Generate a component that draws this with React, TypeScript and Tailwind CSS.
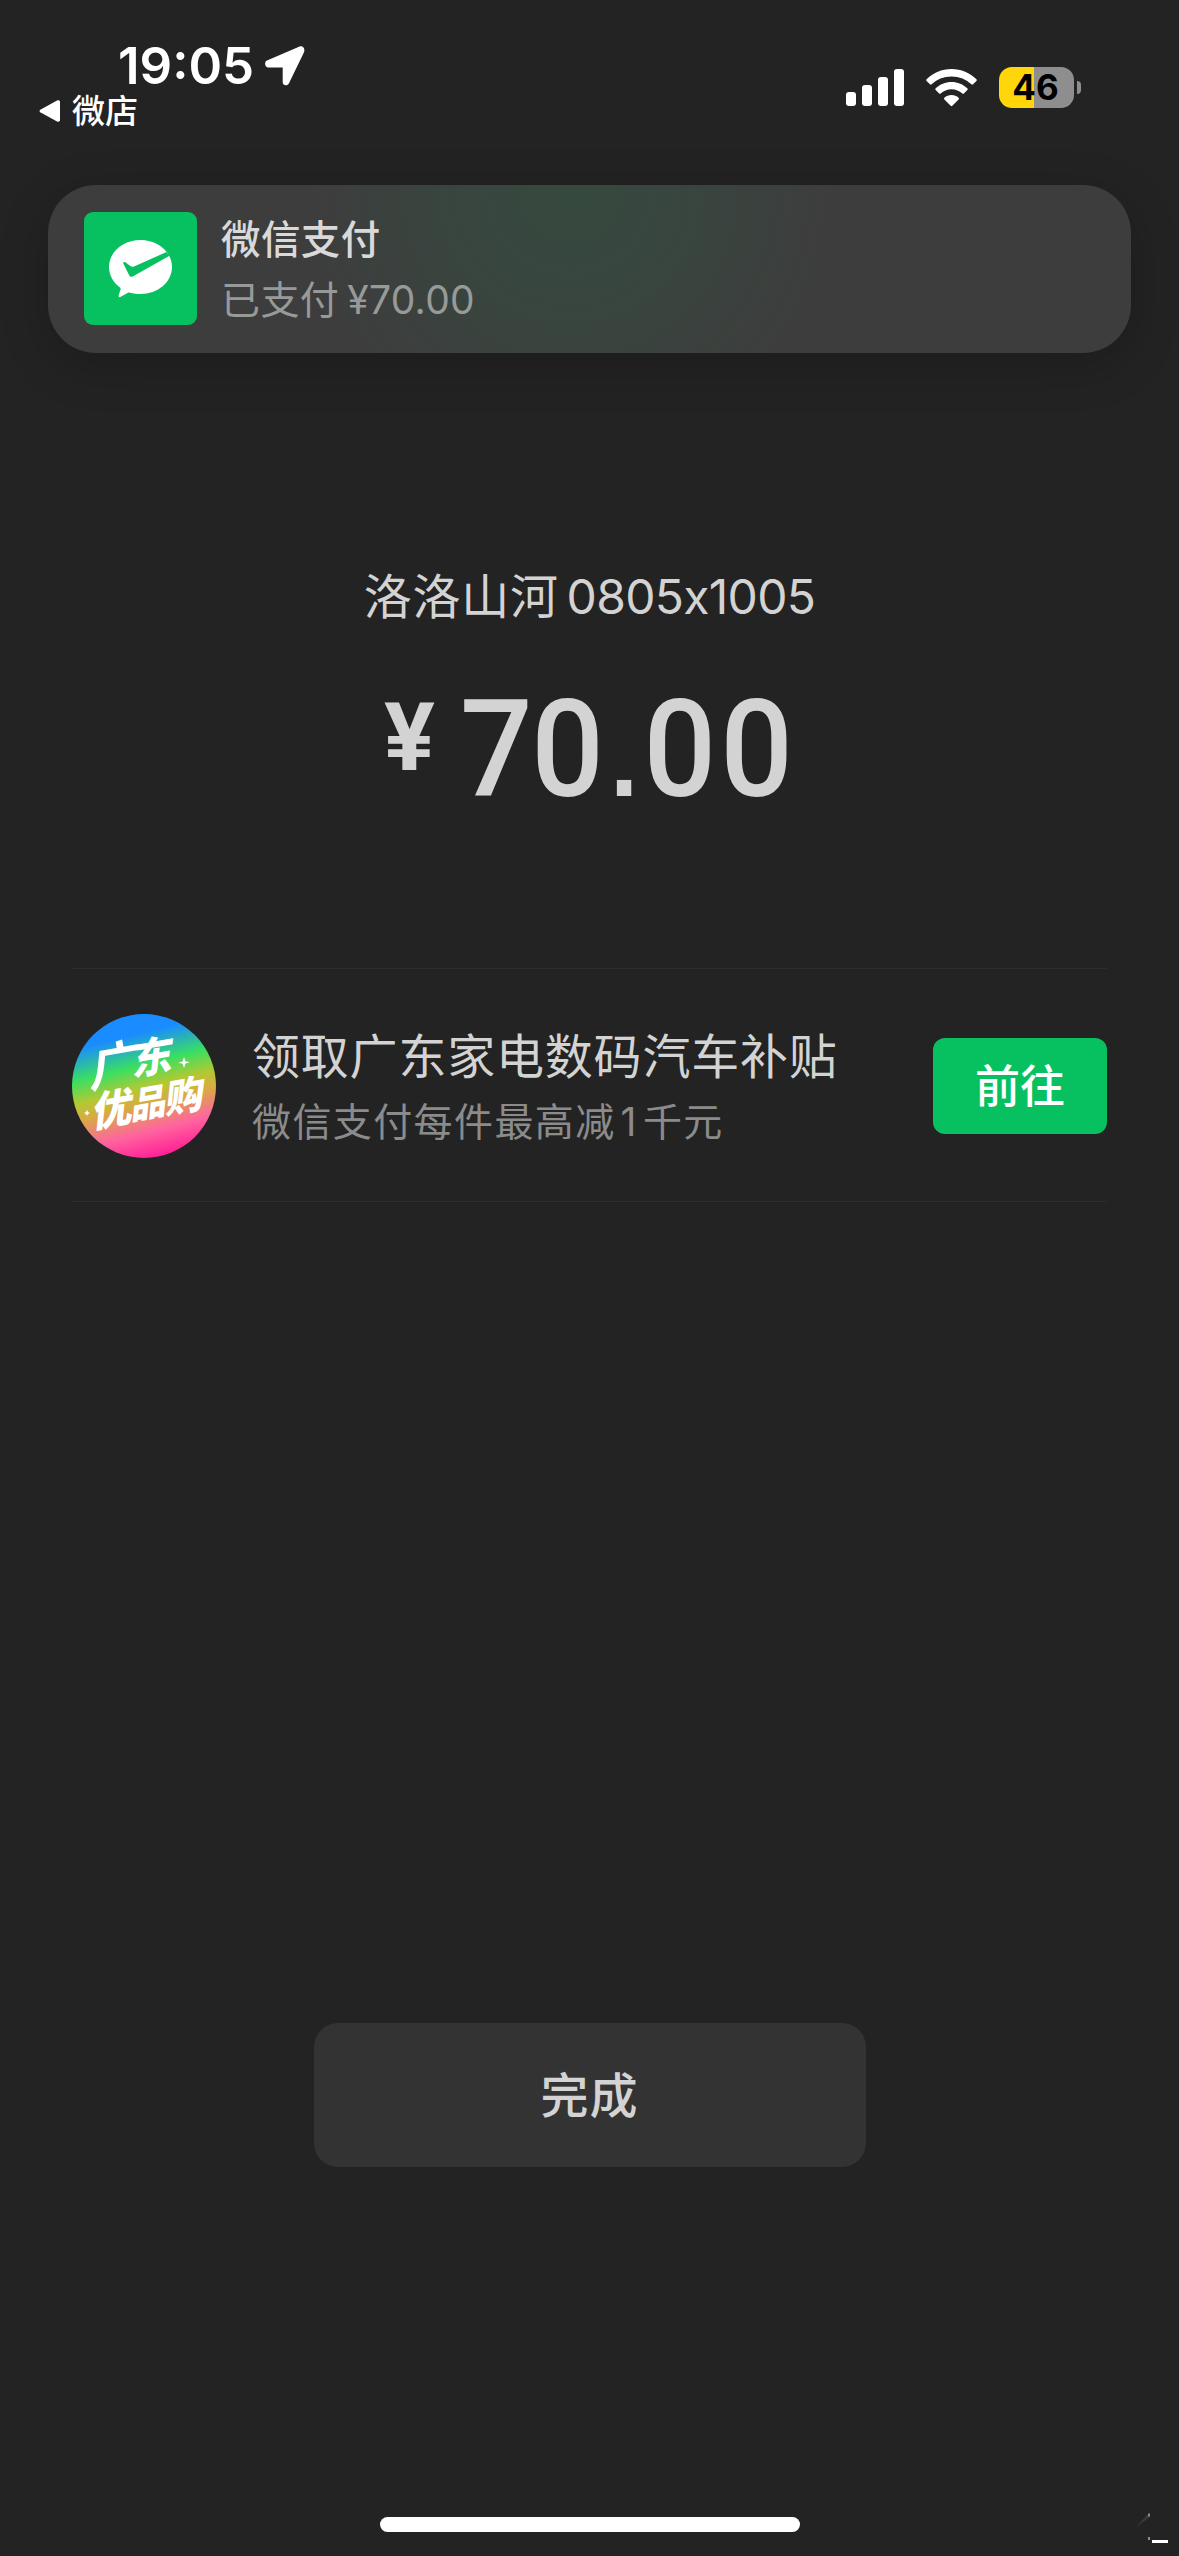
import { clsx } from "clsx";

const signalBars = ["h-[14px]", "h-[21px]", "h-[29px]", "h-[37px]"];

const badgeGlyphs = [
  { char: "广", place: "left-[19px] top-[27px] text-[49px] font-bold" },
  { char: "东", place: "left-[61px] top-[23px] text-[41px] font-black" },
  { char: "优", place: "left-[21px] top-[75px] text-[41px] font-black" },
  { char: "品", place: "left-[60px] top-[71px] text-[36px] font-black" },
  { char: "购", place: "left-[94px] top-[62px] text-[39px] font-black" },
];

function LocationArrow() {
  return (
    <svg width="40" height="40" viewBox="0 0 40 40" fill="white">
      <path d="M34.6.5 2 14.4C-.9 15.6-.4 21.4 3 21.4H17.700V36c0 3.900 5 4.400 6.400.900L39 6.200C40.300 2.500 38-.8 34.600.5Z" />
    </svg>
  );
}

function WifiIcon() {
  return (
    <svg width="51" height="38" viewBox="0 0 51 38" fill="white">
      <path d="M25.500 0C15.800 0 7 3.900.6 10.200a1.300 1.300 0 0 0 0 1.800l3.300 3.300c.5.500 1.200.5 1.700 0C10.700 10.400 17.700 7.400 25.500 7.400s14.800 3 19.900 7.900c.5.500 1.200.5 1.700 0l3.300-3.300a1.300 1.300 0 0 0 0-1.800C44 3.900 35.200 0 25.500 0Z" />
      <path d="M25.500 13C19.400 13 13.800 15.400 9.700 19.300a1.200 1.200 0 0 0 0 1.800l3.400 3.400c.4.400 1.100.4 1.600 0 2.800-2.600 6.600-4.200 10.800-4.200s8 1.600 10.800 4.200c.5.400 1.200.4 1.600 0l3.400-3.400a1.200 1.200 0 0 0 0-1.800C37.200 15.400 31.600 13 25.500 13Z" />
      <path d="M25.500 26c-2.800 0-5.200 1-7.100 2.700a1.100 1.100 0 0 0 0 1.700l6.300 6.400c.5.500 1.100.5 1.600 0l6.300-6.400a1.100 1.100 0 0 0 0-1.700C30.700 27 28.300 26 25.500 26Z" />
    </svg>
  );
}

function Battery() {
  return (
    <div className="flex items-center gap-[3px]">
      <div className="flex h-[41px] w-[75px] items-center justify-center overflow-hidden rounded-[13px] bg-[linear-gradient(90deg,#ffd60a_35px,#8e8e8e_35px)] pr-[2px] text-[35px] font-bold leading-none text-black">
        46
      </div>
      <div className="h-[13px] w-1 rounded-r-full bg-[#8e8e8e]" />
    </div>
  );
}

function StatusBar() {
  return (
    <header className="flex h-[185px] shrink-0 justify-between text-white">
      <div className="pl-[39px] pt-[40px]">
        <div className="flex items-start pl-[79px]">
          <span className="w-[147px] pt-px text-[51px] font-semibold leading-[50px]">19:05</span>
          <span className="pt-[6px]">
            <LocationArrow />
          </span>
        </div>
        <div className="flex items-center gap-[12px]">
          <svg width="21" height="22" viewBox="0 0 21 22" fill="white">
            <path d="M18 .6 1.300 9.700a1.500 1.500 0 0 0 0 2.600L18 21.400c1.500.8 3 .1 3-1.400V2C21 .5 19.500-.2 18 .6Z" />
          </svg>
          <span className="text-[33px] font-medium leading-[40px]">微店</span>
        </div>
      </div>

      <div className="mt-[67px] flex h-[41px] items-center pr-[98px]">
        <div className="flex h-[37px] items-end gap-[6px]">
          {signalBars.map((height) => (
            <div key={height} className={clsx("w-[10px] rounded-[3px] bg-white", height)} />
          ))}
        </div>
        <div className="mx-[22px]">
          <WifiIcon />
        </div>
        <Battery />
      </div>
    </header>
  );
}

function PayLogo() {
  return (
    <div className="-mt-px flex size-[113px] shrink-0 items-center justify-center rounded-[9px] bg-[#07c160]">
      <svg width="63" height="58" viewBox="0 0 63 58">
        <path
          d="M31.500 0C14.100 0 0 12 0 27c0 8.200 4.300 15.600 11 20.500.6.400.8 1.100.6 1.800l-2 6.300c-.3 1 .8 1.900 1.700 1.400l7.200-4.100c.8-.4 1.500-.4 2.300-.2C24.200 53.600 27.800 54 31.500 54 48.900 54 63 42 63 27S48.900 0 31.500 0Z"
          fill="white"
        />
        <path
          d="M57.500 12 25 26.400c-1.300.6-2.500.5-3.600-.3l-5-3.800c-1.500-1-2.700-.1-2 1.400l6 12c.7 1.200 2 1.500 3.300.7L60.500 15.800Z"
          fill="#07c160"
        />
      </svg>
    </div>
  );
}

function PaymentBanner() {
  return (
    <section className="mx-[48px] flex h-[168px] shrink-0 items-center rounded-[48px] bg-[#3d3d3d] bg-[radial-gradient(circle_260px_at_522px_6px,#36493f_0%,#38463f_40%,#3b413e_75%,#3d3d3d_100%)] pl-[36px] shadow-[0_12px_50px_rgba(0,0,0,0.2)]">
      <PayLogo />
      <div className="ml-[24px] pt-px">
        <div className="text-[39.500px] font-medium leading-[60px] tracking-[0.4px] text-[#d9d9d9]">微信支付</div>
        <div className="flex text-[39px] leading-[60px] text-[#979a98]">
          <span className="tracking-[0.4px]">已支付</span>
          <span className="ml-[8px] tracking-[0.3px]">¥70.00</span>
        </div>
      </div>
    </section>
  );
}

function Amount() {
  return (
    <div className="mt-[38px] flex h-[160px] items-start self-start pl-[384px] font-['Roboto'] font-medium">
      <span className="w-[76px] text-[95px] font-bold leading-[135px]">¥</span>
      <span className="origin-left scale-x-[0.94] whitespace-nowrap text-[136px] leading-[160px] tracking-[4.500px]">
        <span className="-mr-[6px]">7</span>0
        <span className="ml-[2px] mr-px font-['Liberation_Sans'] text-[108px] font-bold leading-none">.</span>00
      </span>
    </div>
  );
}

function OfferBadge() {
  return (
    <div className="relative size-[144px] shrink-0 overflow-hidden rounded-full bg-[linear-gradient(166deg,#1a8cff_20%,#3adf62_38%,#b4c832_51%,#d8ac42_60%,#ff64a0_76%,#ff1493_94%)] text-white">
      {badgeGlyphs.map(({ char, place }) => (
        <span
          key={char}
          className={clsx("absolute -rotate-[10deg] -skew-x-[16deg] leading-none", place)}
        >
          {char}
        </span>
      ))}
      <svg className="absolute inset-0" width="144" height="144" viewBox="0 0 144 144" fill="white">
        <path d="m112 43 1.500 4.500L118 48l-4.500 1.500L112 54l-1.500-4.500L106 49l4.500-1.500Z" />
        <path d="m15 96 1 2 2 1-2 1-1 2-1-2-2-1 2-1Z" />
      </svg>
    </div>
  );
}

function OfferRow() {
  return (
    <section className="mx-[72px] mt-[138px] flex h-[234px] shrink-0 items-center border-y border-[#2d2d2d] pt-[2px]">
      <OfferBadge />
      <div className="ml-[36px] flex-1 pt-[2px]">
        <div className="text-[48px] leading-[70px] tracking-[0.8px] text-[#d3d3d3]">领取广东家电数码汽车补贴</div>
        <div className="text-[39px] leading-[60px] tracking-[1.400px] text-[#8b8b8b]">
          微信支付每件最高减<span className="mx-[5px]">1</span>千元
        </div>
      </div>
      <button className="h-[96px] w-[174px] rounded-[12px] bg-[#07c160] pt-[2px] text-[45px] font-medium text-white">
        前往
      </button>
    </section>
  );
}

export default function App() {
  return (
    <main className="relative flex h-[2556px] w-[1179px] flex-col overflow-hidden bg-[#232323] font-['Inter','Noto_Sans_CJK_SC',sans-serif]">
      <StatusBar />
      <PaymentBanner />

      <section className="mt-[209px] flex shrink-0 flex-col items-center text-[#d3d3d3]">
        <div className="flex h-[70px] items-center text-[48px] leading-[70px]">
          <span className="tracking-[0.7px]">洛洛山河</span>
          <span className="ml-[8px] tracking-[-0.7px]">0805x1005</span>
        </div>
        <Amount />
      </section>

      <OfferRow />

      <button className="mx-auto mt-[821px] h-[144px] w-[552px] shrink-0 rounded-[24px] bg-[#333333] pt-px text-[48px] font-medium tracking-[1px] text-[#d3d3d3]">
        完成
      </button>

      <footer className="mt-auto flex shrink-0 justify-center pb-[24px]">
        <div className="h-[15px] w-[420px] rounded-full bg-white" />
      </footer>

      <svg className="absolute bottom-0 right-0" width="60" height="56" viewBox="0 0 60 56">
        <path d="M17 27 28 15h3v2Z" fill="#3a3a3a" />
        <path d="M29 13.500h2v3h-2ZM29 37h2v3h-2Z" fill="#8a8a8a" />
        <path d="M33 40h16v3H33Z" fill="white" />
      </svg>
    </main>
  );
}
